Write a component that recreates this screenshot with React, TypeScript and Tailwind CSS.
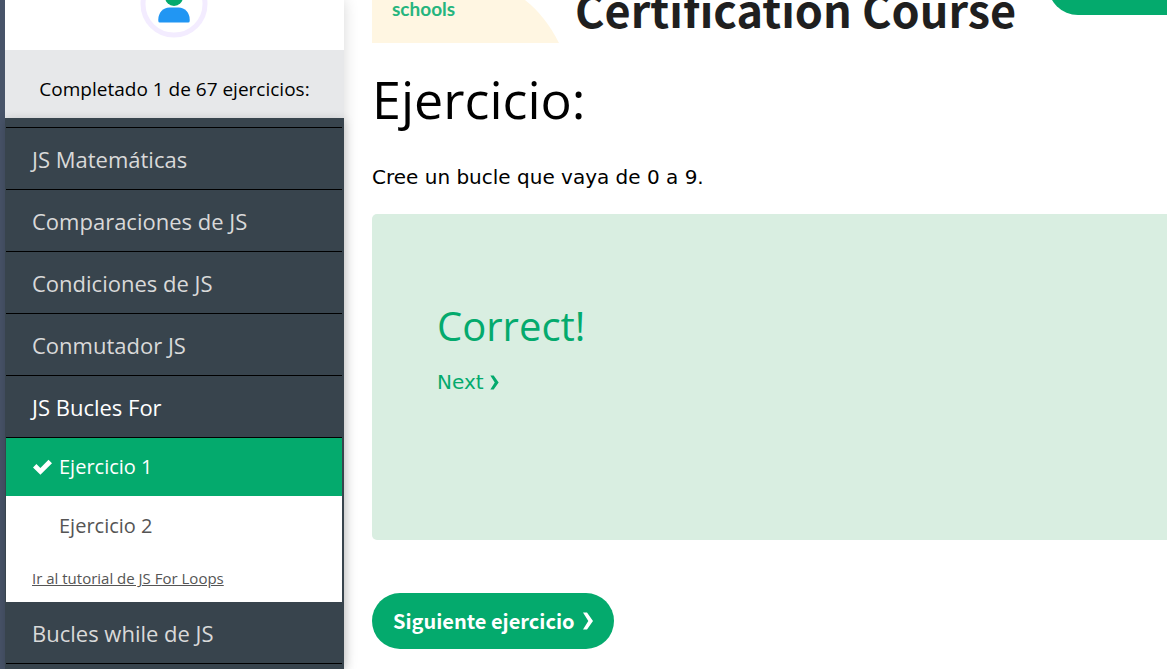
import React from "react";

const sansFont = "font-['Open_Sans',sans-serif]";

const topics = [
  { label: "JS Matemáticas", active: false },
  { label: "Comparaciones de JS", active: false },
  { label: "Condiciones de JS", active: false },
  { label: "Conmutador JS", active: false },
  { label: "JS Bucles For", active: true },
];

function Avatar() {
  return (
    <svg width="68" height="68" viewBox="0 0 68 68" className="block shrink-0" aria-hidden="true">
      <circle cx="34" cy="34" r="31" fill="#fff" stroke="#f3ecff" strokeWidth="5" />
      <circle cx="34" cy="27" r="9" fill="#04aa6d" />
      <path d="M18.300 50.500V51q0 1.500 1.500 1.500H48.200q1.500 0 1.500-1.500V49.500C49.700 43 45 37.500 38.500 37.500H29.500C23 37.500 18.300 43 18.300 49.500Z" fill="#2196f3" />
    </svg>
  );
}

function Check() {
  return (
    <svg width="19" height="16" viewBox="0 0 19 16" className="shrink-0" aria-hidden="true">
      <path d="M0 8.500L3.400 5L7.400 9L15.500 0.800L19 4.200L7.400 15.700Z" fill="currentColor" />
    </svg>
  );
}

function Chevron({ className = "" }: { className?: string }) {
  return (
    <svg width="10" height="18" viewBox="0 0 10 18" className={className} aria-hidden="true">
      <path d="M0 0.500H4L10 9L4 17.500H0L5.300 9Z" fill="currentColor" />
    </svg>
  );
}

function Topic({ label, active = false }: { label: string; active?: boolean }) {
  return (
    <a
      href="#"
      className={
        "flex h-[62px] items-center border-b border-black px-[26px] pt-[2px] text-[22px] " +
        (active ? "text-white" : "text-[#d9d9d9]")
      }
    >
      {label}
    </a>
  );
}

function Sidebar() {
  return (
    <aside className={"relative z-10 flex w-[344px] shrink-0 flex-col bg-[#485469] pl-[5px] shadow-[0_0_14px_rgba(0,0,0,0.16)] " + sansFont}>
      <div className="flex h-[50px] items-end justify-center overflow-hidden bg-white pr-[2px] pb-3">
        <Avatar />
      </div>
      <p className="flex h-[68px] items-center justify-center bg-[#e7e8ea] pt-[10px] text-[19px] text-black">
        Completado 1 de 67 ejercicios:
      </p>
      <nav className="grow bg-[#38444d] pr-[2px] pl-px shadow-[0_2px_10px_rgba(0,0,0,0.2)]">
        <div className="h-[10px] border-b border-black" />
        {topics.map((t) => (
          <Topic key={t.label} label={t.label} active={t.active} />
        ))}
        <a href="#" className="flex h-[58px] items-center gap-[7px] bg-[#04aa6d] pl-[27px] text-[20px] text-white">
          <Check />
          Ejercicio 1
        </a>
        <div className="h-[106px] bg-white text-[#555]">
          <a href="#" className="flex h-[59px] items-center pl-[53px] text-[20px]">
            Ejercicio 2
          </a>
          <a href="#" className="flex h-[47px] items-center pl-[26px] text-[15px] underline">
            Ir al tutorial de JS For Loops
          </a>
        </div>
        <Topic label="Bucles while de JS" />
      </nav>
    </aside>
  );
}

function Banner() {
  return (
    <a href="#" className="relative flex h-[43px] items-end overflow-hidden" aria-label="Certification Course">
      <svg width="187" height="43" viewBox="0 0 187 43" className="absolute bottom-0 left-0" aria-hidden="true">
        <path d="M0 0H153C167 11 178 25 187 43H0Z" fill="#fff6e2" />
      </svg>
      <span className="relative w-[203px] shrink-0 pb-[20px] pl-5 font-['Lato',sans-serif] text-[19px] leading-7 font-bold text-[#26b57e]">
        schools
      </span>
      <span className="shrink-0 pb-1 font-['Noto_Sans_CJK_SC',sans-serif] text-[45px] leading-[60px] font-bold whitespace-nowrap text-[#1f1f1f]">
        Certification Course
      </span>
      <span className="ml-8 h-[60px] w-[200px] shrink-0 -translate-y-7 rounded-full bg-[#04aa6d]" />
    </a>
  );
}

export default function App() {
  return (
    <div className="flex h-screen overflow-hidden bg-white text-black">
      <Sidebar />
      <main className="min-w-0 grow pl-7">
        <Banner />
        <h1 className={"pt-4 text-[52px] leading-[80px] " + sansFont}>Ejercicio:</h1>
        <p className="pt-[22px] font-['DejaVu_Sans',sans-serif] text-[20px] leading-8">
          Cree un bucle que vaya de 0 a 9.
        </p>
        <section className="mt-[21px] h-[326px] rounded-l-[5px] bg-[#d9eee1] pt-[82px] pl-[65px] text-[#04aa6d]">
          <h2 className={"text-[40px] leading-[60px] " + sansFont}>Correct!</h2>
          <a href="#" className="mt-[10px] inline-flex items-center gap-[6px] font-['DejaVu_Sans',sans-serif] text-[20px] leading-8">
            Next
            <Chevron className="h-[15px] w-[9px]" />
          </a>
        </section>
        <button
          type="button"
          className="mt-[53px] flex h-14 items-center gap-2 rounded-full bg-[#04aa6d] px-[21px] font-['Noto_Sans_CJK_SC',sans-serif] text-[20px] font-bold whitespace-nowrap text-white"
        >
          Siguiente ejercicio
          <Chevron />
        </button>
      </main>
    </div>
  );
}
